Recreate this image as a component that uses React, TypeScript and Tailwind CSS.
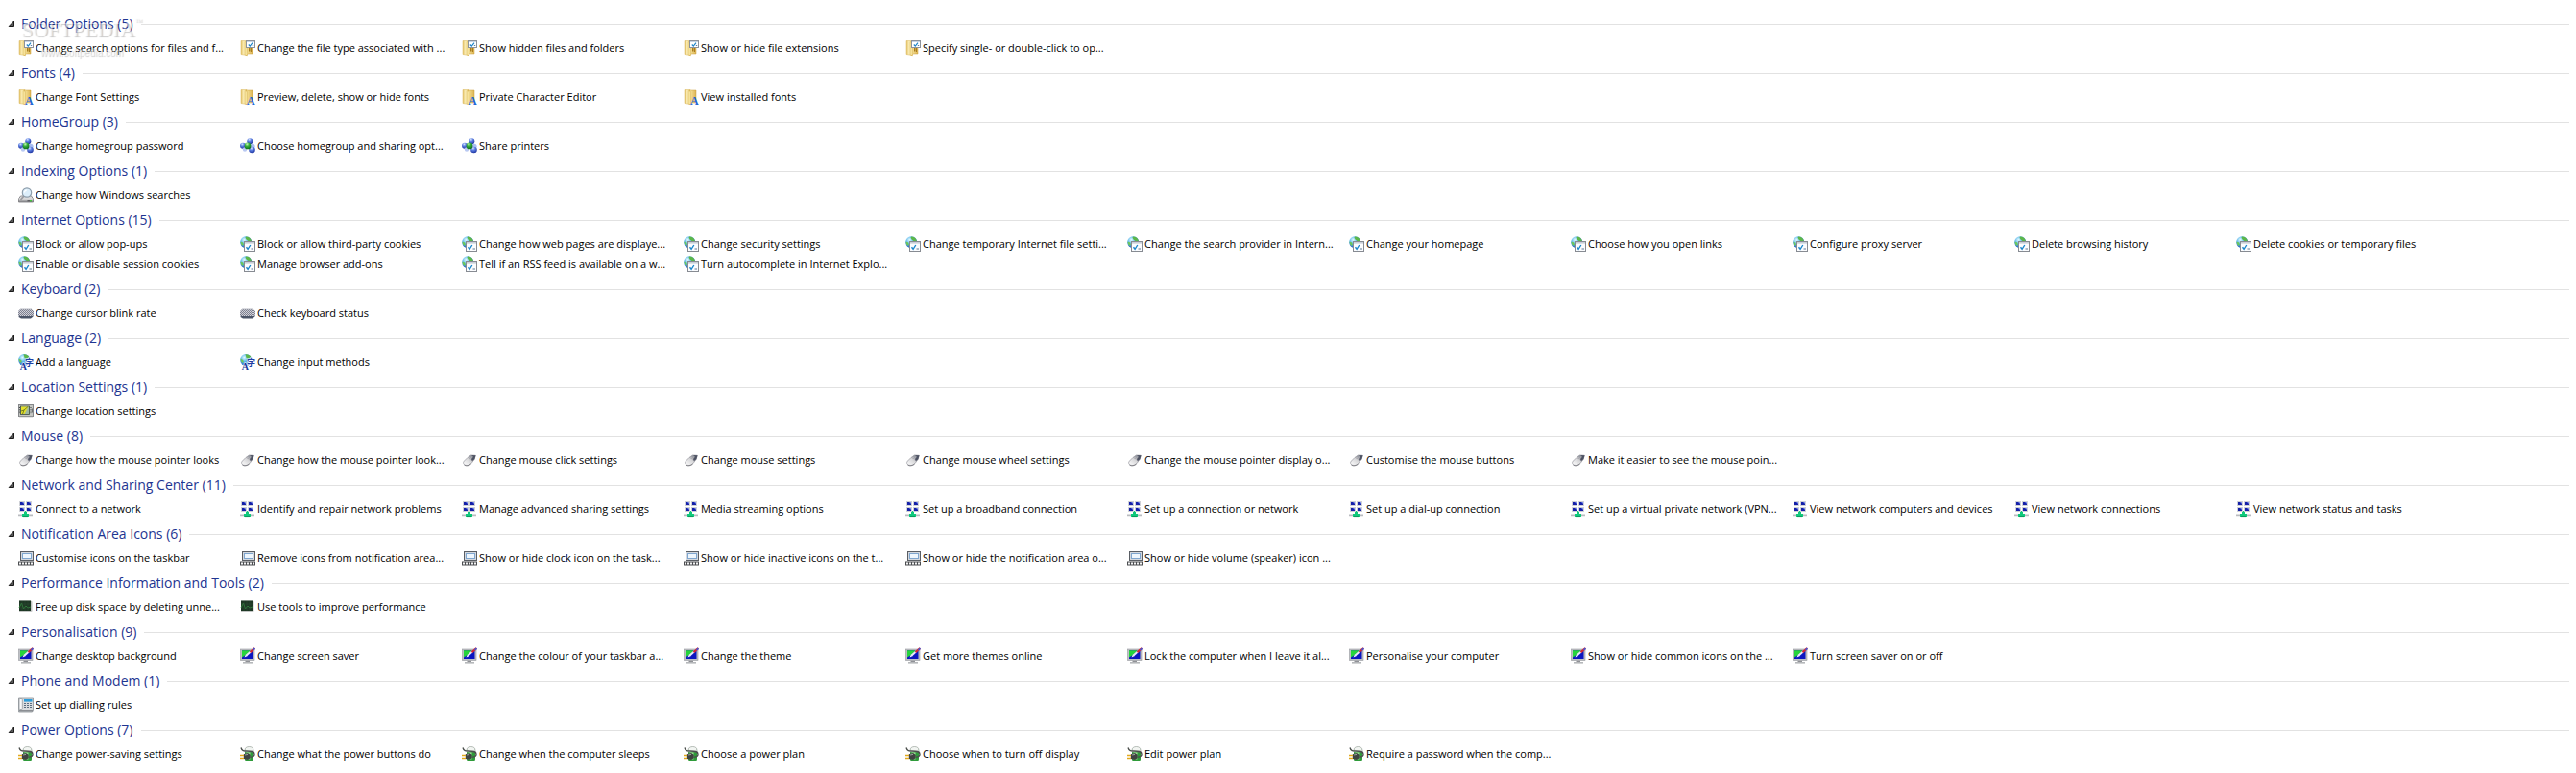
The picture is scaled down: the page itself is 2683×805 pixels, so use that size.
import { useState } from "react";

interface Group {
    name: string;
    icon: React.ElementType;
    tasks: string[];
}

/* Gradients shared by all task icons */
function IconDefs() {
    return (
        <svg className="absolute w-0 h-0" aria-hidden="true">
            <defs>
                <radialGradient id="globe" cx="0.35" cy="0.3" r="0.75">
                    <stop offset="0" stopColor="#e2fbff" />
                    <stop offset="0.45" stopColor="#58b4ea" />
                    <stop offset="1" stopColor="#1c49b4" />
                </radialGradient>
                <radialGradient id="blueBall" cx="0.4" cy="0.25" r="0.8">
                    <stop offset="0" stopColor="#d5e4ff" />
                    <stop offset="0.4" stopColor="#5b7de0" />
                    <stop offset="1" stopColor="#172c9a" />
                </radialGradient>
                <radialGradient id="greenBall" cx="0.4" cy="0.25" r="0.8">
                    <stop offset="0" stopColor="#c9f5b8" />
                    <stop offset="0.4" stopColor="#35b03a" />
                    <stop offset="1" stopColor="#0a6418" />
                </radialGradient>
                <linearGradient id="folderBack" x1="0" x2="1" y1="0" y2="0">
                    <stop offset="0" stopColor="#e3c36a" />
                    <stop offset="0.5" stopColor="#fdf0bb" />
                    <stop offset="1" stopColor="#ecd07c" />
                </linearGradient>
                <linearGradient id="folderFront" x1="0" x2="1" y1="0" y2="0">
                    <stop offset="0" stopColor="#f8e6a0" />
                    <stop offset="1" stopColor="#dcb452" />
                </linearGradient>
                <linearGradient id="metal" x1="0" x2="0" y1="0" y2="1">
                    <stop offset="0" stopColor="#f4f4f4" />
                    <stop offset="1" stopColor="#8b8b8f" />
                </linearGradient>
                <linearGradient id="mouse" x1="0" x2="1" y1="1" y2="0">
                    <stop offset="0" stopColor="#ffffff" />
                    <stop offset="0.5" stopColor="#d8d8da" />
                    <stop offset="1" stopColor="#707078" />
                </linearGradient>
                <pattern id="keys" width="2" height="2" patternUnits="userSpaceOnUse">
                    <rect width="2" height="2" fill="#7e8090" />
                    <rect width="1" height="1" fill="#d6d7de" />
                    <rect x="1" y="1" width="1" height="1" fill="#c6c7d0" />
                </pattern>
            </defs>
        </svg>
    );
}

function IconFrame({ children }: { children: React.ReactNode }) {
    return (
        <svg viewBox="0 0 16 16" className="w-4 h-4 shrink-0 overflow-visible" aria-hidden="true">
            {children}
        </svg>
    );
}

function FolderShape() {
    return (
        <>
            <path d="M1 .5h6v15L1 14.500z" fill="url(#folderBack)" stroke="#d9b65c" strokeWidth="0.500" />
            <path d="M6.500 1H13V14H8l-1.500 1.800z" fill="url(#folderFront)" stroke="#c99f3c" strokeWidth="0.500" />
            <path d="M5 1.500l2.500 1v13.300L5 15z" fill="#f6e29a" stroke="#d2ab4b" strokeWidth="0.400" />
        </>
    );
}

function FolderOptionsIcon() {
    return (
        <IconFrame>
            <FolderShape />
            <path d="M9 8h1.500v3.500H9zM11 8h1v4h-1z" fill="#a87c1e" />
            <rect x="6.500" y="0.500" width="9" height="7" fill="#fff" stroke="#8d929a" />
            <rect x="7" y="1" width="8" height="1" fill="#c5d3e4" />
            <path d="M8.800 4.500l1.500 1.600L13 2.600" fill="none" stroke="#1d84c8" strokeWidth="1.200" />
            <path d="M12.800 5.500h1.400" stroke="#2d5f94" strokeWidth="0.800" />
        </IconFrame>
    );
}

function FontsIcon() {
    return (
        <IconFrame>
            <FolderShape />
            <text x="7" y="16" fontSize="12" fontWeight="700" fill="#1f66d6" className="font-['Liberation_Serif',serif]">
                A
            </text>
        </IconFrame>
    );
}

function HomeGroupIcon() {
    return (
        <IconFrame>
            <circle cx="10.300" cy="3.200" r="3" fill="url(#blueBall)" />
            <circle cx="3" cy="7.800" r="3" fill="url(#blueBall)" />
            <circle cx="13" cy="8.300" r="2.600" fill="#a9bdf0" />
            <circle cx="5" cy="11.500" r="2.200" fill="#b9c9f2" />
            <circle cx="12.500" cy="12" r="3.300" fill="url(#blueBall)" />
            <circle cx="8" cy="7.900" r="3.400" fill="url(#greenBall)" />
        </IconFrame>
    );
}

function IndexingIcon() {
    return (
        <IconFrame>
            <path d="M2.500 9h11l2 3v3H.5v-3z" fill="url(#metal)" stroke="#77777b" strokeWidth="0.800" />
            <path d="M.7 12h14.600" stroke="#f5f5f5" strokeWidth="0.800" />
            <rect x="9.500" y="13" width="4.500" height="1.400" fill="#5f6063" />
            <rect x="12" y="13" width="2" height="1.400" fill="#43c53c" />
            <path d="M6 9l-3.500 4" stroke="#9b9b9f" strokeWidth="1.800" />
            <circle cx="9" cy="5.500" r="4.700" fill="#dceefa" stroke="#8d9dab" strokeWidth="1.200" />
            <path d="M6.500 5.500a2.500 2.500 0 0 1 2.500-2.500" fill="none" stroke="#fff" strokeWidth="1.200" />
        </IconFrame>
    );
}

function InternetIcon() {
    return (
        <IconFrame>
            <circle cx="6.200" cy="6.200" r="6" fill="url(#globe)" />
            <path d="M6 .4c3-.2 5.400 2 5.800 4.600H8.500L6.600 3.600 5.500 1.800z" fill="#5cb749" />
            <path d="M.6 5.500l2.600 1 .6 2.500-1.500.8C1 8.600.5 7.200.6 5.500z" fill="#6cc75a" />
            <rect x="4.500" y="5.500" width="11" height="10" fill="#fbfcfe" stroke="#878b92" />
            <rect x="5" y="6" width="10" height="1.600" fill="#c8ced8" />
            <path d="M6.500 11.300l1.600 2L10.800 9" fill="none" stroke="#1b86cc" strokeWidth="1.400" />
            <path d="M11.500 13h2.500" stroke="#5f7894" strokeWidth="1" />
        </IconFrame>
    );
}

function KeyboardIcon() {
    return (
        <IconFrame>
            <path d="M1 7h14.500v4.500L13 13.500H3L.5 12z" fill="#4b5468" />
            <path d="M2 4h12l2 2v4l-2 1H2l-2-1V6z" fill="url(#keys)" />
            <path d="M2 4h12" stroke="#a5a7b3" strokeWidth="0.800" />
        </IconFrame>
    );
}

function LanguageIcon() {
    return (
        <IconFrame>
            <circle cx="6.200" cy="6" r="6" fill="url(#globe)" />
            <path d="M5.500.3c3-.3 5 1.200 6 3L8 5 6.500 3.700z" fill="#5cb749" />
            <path d="M.6 4.500l2.600 1.500.6 2-1.500.8C1 7.600.5 6 .6 4.500z" fill="#6cc75a" />
            <text x="1.800" y="16" fontSize="10" fontWeight="700" fill="#17389c" stroke="#fff" strokeWidth="1" paintOrder="stroke" className="font-['Liberation_Serif',serif]">
                A
            </text>
            <text x="7" y="11.600" fontSize="9" fontWeight="700" fill="#1f3fa6" stroke="#fff" strokeWidth="1" paintOrder="stroke" className="font-['Noto_Sans_CJK_JP',sans-serif]">
                字
            </text>
        </IconFrame>
    );
}

function LocationIcon() {
    return (
        <IconFrame>
            <rect x="0.500" y="1.500" width="15" height="12" fill="#c5c7c3" stroke="#85878a" />
            <rect x="2.500" y="3" width="9" height="8.500" fill="#9db8a0" stroke="#3e4a3e" strokeWidth="0.800" />
            <path d="M3 3.400h7.500L6.500 11H3z" fill="#e3e02c" />
            <path d="M3 8l3-1 4-3.500M6 7l-1.500 4" fill="none" stroke="#5b6a20" strokeWidth="0.800" />
            <path d="M1.400 4v7M13 4v7" stroke="#35393a" strokeWidth="1" strokeDasharray="1 1.300" />
            <path d="M14.400 5.500v4" stroke="#4c4f50" strokeWidth="0.800" />
            <path d="M1 14.300h14" stroke="#d6d6d6" strokeWidth="0.800" />
        </IconFrame>
    );
}

function MouseIcon() {
    return (
        <IconFrame>
            <path d="M6 5.500L9.500 3l4.800.3L13 7.500l-3 4c-1.500 2-4.500 2.500-6.500 1.700C1.300 12.300 1 10.500 2.500 9z" fill="url(#mouse)" stroke="#97979d" strokeWidth="0.700" />
            <path d="M9.500 3l5 .3-1.200 4-2.500 2-.8-2.300L12 4.800z" fill="#4d5263" />
            <path d="M6.500 5.500L10 7.300" stroke="#a5a5ac" strokeWidth="0.800" />
            <path d="M7.500 4.600l2-1.300 2 .8-1.500 2z" fill="#9a9da6" />
            <path d="M2.500 13.200c2 1.200 5 .8 7-1.200" fill="none" stroke="#6d6d74" strokeWidth="0.800" />
        </IconFrame>
    );
}

function NetworkIcon() {
    const cells = [[1, 0], [8, 0], [1, 6], [8, 6]];
    return (
        <IconFrame>
            {cells.map(([x, y]) => (
                <g key={`${x}-${y}`}>
                    <rect x={x} y={y} width="6" height="5" fill="#cfd1d7" />
                    <rect x={x + 1} y={y + 1} width="4" height="3" fill="#1520a8" />
                    <path d={`M${x + 3} ${y + 1}h2v2z`} fill="#7e92ee" />
                </g>
            ))}
            <path d="M6 11h3v2h2v3H4v-3h2z" fill="#10c97c" />
            <path d="M7 10h1v1H7z" fill="#10c97c" />
            <path d="M0 13.500h4v1.700H0zM11 13.500h4v1.700h-4z" fill="#b9bbbf" />
            <path d="M5 15.600h5" stroke="#0b8a55" strokeWidth="0.800" />
        </IconFrame>
    );
}

function NotificationIcon() {
    return (
        <IconFrame>
            <rect x="2.500" y="1.500" width="13" height="9" fill="#d4d8de" stroke="#5a5e64" />
            <rect x="4.500" y="3.500" width="9" height="5" fill="#eef6fd" stroke="#7fa6cf" />
            <rect x="0" y="11.500" width="16" height="4" fill="#4b4d50" />
            <path d="M1 13.500h14" stroke="#f4f4f4" strokeWidth="2" strokeDasharray="2 1" />
        </IconFrame>
    );
}

function PerformanceIcon() {
    return (
        <IconFrame>
            <path d="M1 1.500h12l1.500 1v10L13 13H1z" fill="#c3c5c4" />
            <rect x="1" y="1.500" width="12" height="10.500" fill="#1d3624" />
            <path d="M1 9l2.500-5 2 6 2.500-3 2 2 3-1" fill="none" stroke="#2f7d3a" strokeWidth="1" />
            <path d="M4 2v10M7 2v10M10 2v10M1 5h12M1 9h12" stroke="#2f5237" strokeWidth="0.400" />
        </IconFrame>
    );
}

function PersonaliseIcon() {
    return (
        <IconFrame>
            <rect x="0.500" y="1" width="14.500" height="11.500" fill="#bfc1c6" stroke="#96989e" strokeWidth="0.600" />
            <rect x="2" y="2.200" width="11.500" height="8.800" fill="#0c16c0" />
            <path d="M2 2.200h9L6 7l-4 2.500z" fill="#27d43c" />
            <path d="M4.500 9.500L6 6.500l1.800 1.400z" fill="#fff" />
            <path d="M6.500 7.500l5-4.500" stroke="#e9ebf5" strokeWidth="2" />
            <path d="M10.500 4.200L15.300 0" stroke="#d42a35" strokeWidth="2.200" />
            <path d="M13.500 2l2-1.800" stroke="#4357d8" strokeWidth="1.600" />
            <path d="M5.500 12.800h4.500v1.400H5.500z" fill="#8f9196" />
            <path d="M3 14h10v1.600H3z" fill="#b5b7ba" />
        </IconFrame>
    );
}

function PhoneIcon() {
    return (
        <IconFrame>
            <path d="M.5 1h15v12.500l-1 1.500H.5z" fill="#d9dcdf" stroke="#8c9095" strokeWidth="0.800" />
            <rect x="1" y="1.500" width="3.300" height="11" rx="1" fill="#f7f8f9" stroke="#8b9095" strokeWidth="0.700" />
            <rect x="6" y="2" width="8.500" height="2.600" fill="#2c9ddb" />
            <path d="M6 6.500h8.500M6 8.500h8.500M6 10.500h8.500" stroke="#5b6d80" strokeWidth="1" strokeDasharray="2 1" />
            <path d="M1 13.800h14" stroke="#777b80" strokeWidth="1.200" />
        </IconFrame>
    );
}

function PowerIcon() {
    return (
        <IconFrame>
            <rect x="5" y="2" width="9" height="14" rx="3" fill="#2f9b3a" />
            <path d="M5 4.500C5 1.500 7 .5 9.500.5s4.500 1 4.500 4V6H5z" fill="#f2f5f2" stroke="#8a938c" strokeWidth="0.600" />
            <path d="M6.500 6.500h4v7h-4z" fill="#9fe795" />
            <path d="M1 1.500C2 5 4 5 7 5c5 0 8 .3 8 3.200 0 2-1.800 2.800-3.800 3" fill="none" stroke="#4b4f4c" strokeWidth="1.400" />
            <path d="M3.800 8.200L8 7l2.700 1.800v3.400L8 14l-4.200-1z" fill="#3f4341" />
            <path d="M5 9l3-.6" stroke="#b4b8b5" strokeWidth="0.800" />
            <path d="M0 9.500h4M0 12.500h4" stroke="#e2a91c" strokeWidth="1.400" />
        </IconFrame>
    );
}

const GROUPS: Group[] = [
    {
        name: "Folder Options",
        icon: FolderOptionsIcon,
        tasks: [
            "Change search options for files and f...",
            "Change the file type associated with ...",
            "Show hidden files and folders",
            "Show or hide file extensions",
            "Specify single- or double-click to op...",
        ],
    },
    {
        name: "Fonts",
        icon: FontsIcon,
        tasks: [
            "Change Font Settings",
            "Preview, delete, show or hide fonts",
            "Private Character Editor",
            "View installed fonts",
        ],
    },
    {
        name: "HomeGroup",
        icon: HomeGroupIcon,
        tasks: ["Change homegroup password", "Choose homegroup and sharing opt...", "Share printers"],
    },
    {
        name: "Indexing Options",
        icon: IndexingIcon,
        tasks: ["Change how Windows searches"],
    },
    {
        name: "Internet Options",
        icon: InternetIcon,
        tasks: [
            "Block or allow pop-ups",
            "Block or allow third-party cookies",
            "Change how web pages are displaye...",
            "Change security settings",
            "Change temporary Internet file setti...",
            "Change the search provider in Intern...",
            "Change your homepage",
            "Choose how you open links",
            "Configure proxy server",
            "Delete browsing history",
            "Delete cookies or temporary files",
            "Enable or disable session cookies",
            "Manage browser add-ons",
            "Tell if an RSS feed is available on a w...",
            "Turn autocomplete in Internet Explo...",
        ],
    },
    {
        name: "Keyboard",
        icon: KeyboardIcon,
        tasks: ["Change cursor blink rate", "Check keyboard status"],
    },
    {
        name: "Language",
        icon: LanguageIcon,
        tasks: ["Add a language", "Change input methods"],
    },
    {
        name: "Location Settings",
        icon: LocationIcon,
        tasks: ["Change location settings"],
    },
    {
        name: "Mouse",
        icon: MouseIcon,
        tasks: [
            "Change how the mouse pointer looks",
            "Change how the mouse pointer look...",
            "Change mouse click settings",
            "Change mouse settings",
            "Change mouse wheel settings",
            "Change the mouse pointer display o...",
            "Customise the mouse buttons",
            "Make it easier to see the mouse poin...",
        ],
    },
    {
        name: "Network and Sharing Center",
        icon: NetworkIcon,
        tasks: [
            "Connect to a network",
            "Identify and repair network problems",
            "Manage advanced sharing settings",
            "Media streaming options",
            "Set up a broadband connection",
            "Set up a connection or network",
            "Set up a dial-up connection",
            "Set up a virtual private network (VPN...",
            "View network computers and devices",
            "View network connections",
            "View network status and tasks",
        ],
    },
    {
        name: "Notification Area Icons",
        icon: NotificationIcon,
        tasks: [
            "Customise icons on the taskbar",
            "Remove icons from notification area...",
            "Show or hide clock icon on the task...",
            "Show or hide inactive icons on the t...",
            "Show or hide the notification area o...",
            "Show or hide volume (speaker) icon ...",
        ],
    },
    {
        name: "Performance Information and Tools",
        icon: PerformanceIcon,
        tasks: ["Free up disk space by deleting unne...", "Use tools to improve performance"],
    },
    {
        name: "Personalisation",
        icon: PersonaliseIcon,
        tasks: [
            "Change desktop background",
            "Change screen saver",
            "Change the colour of your taskbar a...",
            "Change the theme",
            "Get more themes online",
            "Lock the computer when I leave it al...",
            "Personalise your computer",
            "Show or hide common icons on the ...",
            "Turn screen saver on or off",
        ],
    },
    {
        name: "Phone and Modem",
        icon: PhoneIcon,
        tasks: ["Set up dialling rules"],
    },
    {
        name: "Power Options",
        icon: PowerIcon,
        tasks: [
            "Change power-saving settings",
            "Change what the power buttons do",
            "Change when the computer sleeps",
            "Choose a power plan",
            "Choose when to turn off display",
            "Edit power plan",
            "Require a password when the comp...",
        ],
    },
];

function TaskGroup({ group }: { group: Group }) {
    const [open, setOpen] = useState(true);
    const Icon = group.icon;

    return (
        <section className="pb-0.5">
            <h2 className="flex items-center gap-2 h-7 pl-2 pr-[7px]">
                <button
                    type="button"
                    aria-expanded={open}
                    onClick={() => setOpen(!open)}
                    className="flex items-center gap-1.5 text-[14px] leading-5 text-[#1e3591]"
                >
                    <svg viewBox="0 0 8 8" className={open ? "w-2 h-2" : "w-2 h-2 -rotate-45"} aria-hidden="true">
                        <path d="M6.500 1v5.500H1.200z" fill="#595959" stroke="#1c1c1c" />
                    </svg>
                    {group.name} ({group.tasks.length})
                </button>
                <span className="flex-1 h-px bg-[#e2e2e2]" />
            </h2>

            {open && (
                <ul className="grid grid-cols-[repeat(auto-fill,231px)] pl-[19px]">
                    {group.tasks.map((task) => (
                        <li key={task} className="flex items-center h-[21px]">
                            <a href="#" className="flex items-center gap-0.5 text-[11px] leading-4 text-black whitespace-nowrap">
                                <Icon />
                                {task}
                            </a>
                        </li>
                    ))}
                </ul>
            )}
        </section>
    );
}

function Watermark() {
    return (
        <div className="absolute left-[22px] top-[19px] flex flex-col pointer-events-none select-none text-white/50 [text-shadow:1px_1px_1px_rgb(0_0_0/0.22)]">
            <div className="flex items-start font-['Liberation_Serif',serif] text-[22px] leading-6">
                SOFTPEDIA
                <span className="text-[8px] leading-2">™</span>
            </div>
            <span className="pl-5 pt-1 font-['Liberation_Sans',sans-serif] text-[10px] leading-4">www.softpedia.com</span>
        </div>
    );
}

export default function App() {
    return (
        <main className="relative min-h-screen bg-white pt-[11px] pb-2 font-['Open_Sans','Noto_Sans',sans-serif]">
            <IconDefs />
            {GROUPS.map((group) => (
                <TaskGroup key={group.name} group={group} />
            ))}
            <Watermark />
        </main>
    );
}
